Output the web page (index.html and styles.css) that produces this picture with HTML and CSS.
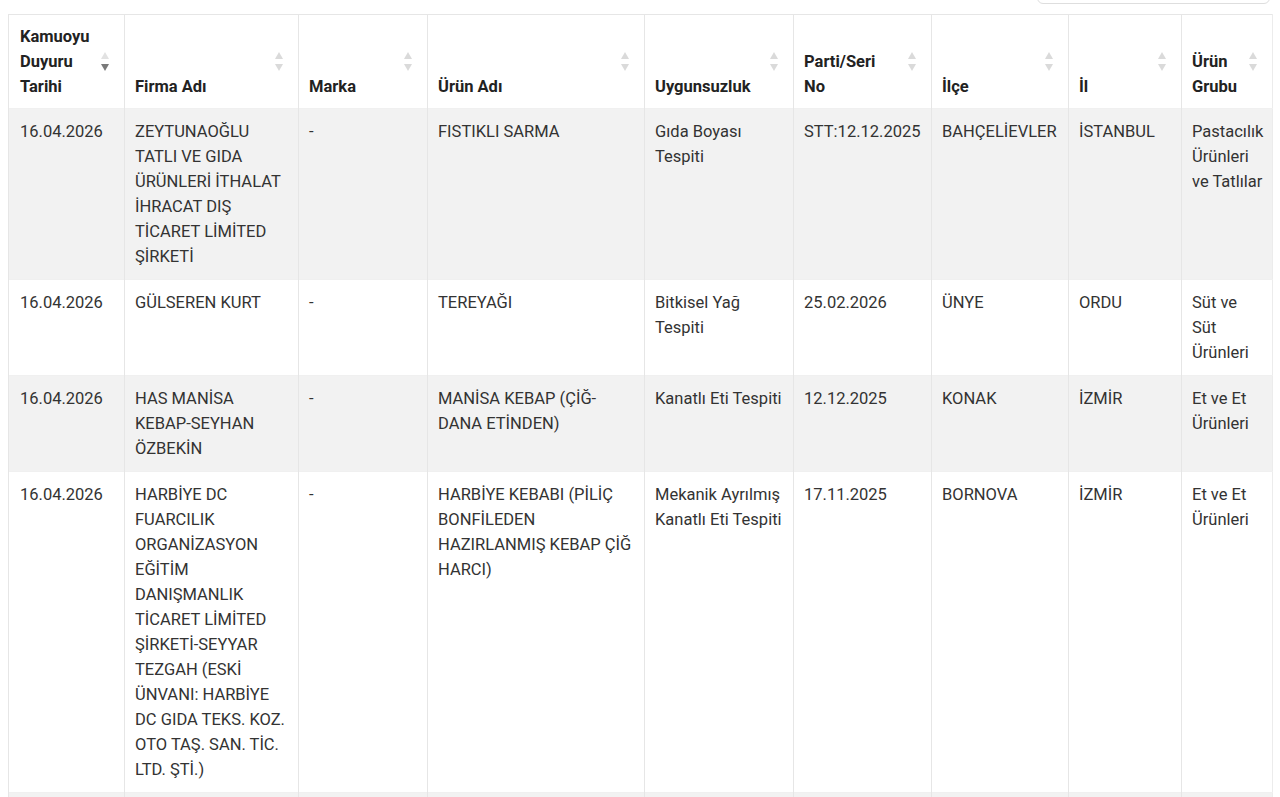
FILE: index.html
```html
<!DOCTYPE html>
<html lang="tr">
<head>
<meta charset="utf-8">
<title>Kamuoyu Duyuruları</title>
<link rel="stylesheet" href="styles.css">
</head>
<body>
<div class="page">
  <div class="filter">
    <input class="search" type="search" aria-label="Ara">
  </div>
  <table class="grid">
    <colgroup>
      <col class="w1"><col class="w2"><col class="w3"><col class="w4"><col class="w5"><col class="w6"><col class="w7"><col class="w8"><col class="w9">
    </colgroup>
    <thead>
      <tr>
        <th class="sorted">Kamuoyu Duyuru Tarihi<span class="sort"><svg viewBox="0 0 8 19" width="8" height="19"><path class="up" d="M4 0 L8 7 L0 7 Z"/><path class="down" d="M0 12 L8 12 L4 19 Z"/></svg></span></th>
        <th>Firma Adı<span class="sort"><svg viewBox="0 0 8 19" width="8" height="19"><path class="up" d="M4 0 L8 7 L0 7 Z"/><path class="down" d="M0 12 L8 12 L4 19 Z"/></svg></span></th>
        <th>Marka<span class="sort"><svg viewBox="0 0 8 19" width="8" height="19"><path class="up" d="M4 0 L8 7 L0 7 Z"/><path class="down" d="M0 12 L8 12 L4 19 Z"/></svg></span></th>
        <th>Ürün Adı<span class="sort"><svg viewBox="0 0 8 19" width="8" height="19"><path class="up" d="M4 0 L8 7 L0 7 Z"/><path class="down" d="M0 12 L8 12 L4 19 Z"/></svg></span></th>
        <th>Uygunsuzluk<span class="sort"><svg viewBox="0 0 8 19" width="8" height="19"><path class="up" d="M4 0 L8 7 L0 7 Z"/><path class="down" d="M0 12 L8 12 L4 19 Z"/></svg></span></th>
        <th>Parti/Seri No<span class="sort"><svg viewBox="0 0 8 19" width="8" height="19"><path class="up" d="M4 0 L8 7 L0 7 Z"/><path class="down" d="M0 12 L8 12 L4 19 Z"/></svg></span></th>
        <th>İlçe<span class="sort"><svg viewBox="0 0 8 19" width="8" height="19"><path class="up" d="M4 0 L8 7 L0 7 Z"/><path class="down" d="M0 12 L8 12 L4 19 Z"/></svg></span></th>
        <th>İl<span class="sort"><svg viewBox="0 0 8 19" width="8" height="19"><path class="up" d="M4 0 L8 7 L0 7 Z"/><path class="down" d="M0 12 L8 12 L4 19 Z"/></svg></span></th>
        <th>Ürün Grubu<span class="sort"><svg viewBox="0 0 8 19" width="8" height="19"><path class="up" d="M4 0 L8 7 L0 7 Z"/><path class="down" d="M0 12 L8 12 L4 19 Z"/></svg></span></th>
      </tr>
    </thead>
    <tbody>
      <tr class="odd">
        <td>16.04.2026</td>
        <td>ZEYTUNAOĞLU TATLI VE GIDA ÜRÜNLERİ İTHALAT İHRACAT DIŞ TİCARET LİMİTED ŞİRKETİ</td>
        <td>-</td>
        <td>FISTIKLI SARMA</td>
        <td>Gıda Boyası Tespiti</td>
        <td>STT:12.12.2025</td>
        <td>BAHÇELİEVLER</td>
        <td>İSTANBUL</td>
        <td>Pastacılık Ürünleri ve Tatlılar</td>
      </tr>
      <tr>
        <td>16.04.2026</td>
        <td>GÜLSEREN KURT</td>
        <td>-</td>
        <td>TEREYAĞI</td>
        <td>Bitkisel Yağ Tespiti</td>
        <td>25.02.2026</td>
        <td>ÜNYE</td>
        <td>ORDU</td>
        <td>Süt ve Süt Ürünleri</td>
      </tr>
      <tr class="odd">
        <td>16.04.2026</td>
        <td>HAS MANİSA KEBAP-SEYHAN ÖZBEKİN</td>
        <td>-</td>
        <td>MANİSA KEBAP (ÇİĞ-DANA ETİNDEN)</td>
        <td>Kanatlı Eti Tespiti</td>
        <td>12.12.2025</td>
        <td>KONAK</td>
        <td>İZMİR</td>
        <td>Et ve Et Ürünleri</td>
      </tr>
      <tr>
        <td>16.04.2026</td>
        <td>HARBİYE DC FUARCILIK ORGANİZASYON EĞİTİM DANIŞMANLIK TİCARET LİMİTED ŞİRKETİ-SEYYAR TEZGAH (ESKİ ÜNVANI: HARBİYE DC GIDA TEKS. KOZ. OTO TAŞ. SAN. TİC. LTD. ŞTİ.)</td>
        <td>-</td>
        <td>HARBİYE KEBABI (PİLİÇ BONFİLEDEN HAZIRLANMIŞ KEBAP ÇİĞ HARCI)</td>
        <td>Mekanik Ayrılmış Kanatlı Eti Tespiti</td>
        <td>17.11.2025</td>
        <td>BORNOVA</td>
        <td>İZMİR</td>
        <td>Et ve Et Ürünleri</td>
      </tr>
      <tr class="odd">
        <td>&nbsp;</td><td>&nbsp;</td><td>&nbsp;</td><td>&nbsp;</td><td>&nbsp;</td><td>&nbsp;</td><td>&nbsp;</td><td>&nbsp;</td><td>&nbsp;</td>
      </tr>
    </tbody>
  </table>
</div>
</body>
</html>
```
FILE: styles.css
```css
html, body {
  margin: 0;
  padding: 0;
  background: #ffffff;
}

body {
  font-family: Roboto, "Liberation Sans", Arial, sans-serif;
  font-size: 16.5px;
  color: #333333;
  overflow: hidden;
}

.page {
  padding: 0 8px;
}

.filter {
  display: flex;
  justify-content: flex-end;
  margin-top: -30px;
  margin-bottom: 10px;
  padding-right: 2px;
}

.search {
  width: 233px;
  height: 34px;
  box-sizing: border-box;
  border: 1px solid #dedede;
  border-radius: 6px;
  background: #fff;
}

.grid {
  width: 1264px;
  table-layout: fixed;
  border-collapse: collapse;
  border-top: 1px solid #e6e6e6;
  border-left: 1px solid #ececec;
  border-right: 1px solid #ececec;
}

.w1 { width: 116px; }
.w2 { width: 174px; }
.w3 { width: 129px; }
.w4 { width: 217px; }
.w5 { width: 149px; }
.w6 { width: 138px; }
.w7 { width: 137px; }
.w8 { width: 113px; }
.w9 { width: 91px; }

.grid th {
  position: relative;
  text-align: left;
  vertical-align: bottom;
  font-weight: 700;
  color: #222222;
  line-height: 25px;
  padding: 9px 34px 9px 10px;
  border-left: 1px solid #e6e6e6;
}

.grid th:first-child,
.grid td:first-child {
  padding-left: 11px;
}

.sort {
  position: absolute;
  right: 15px;
  top: 50%;
  margin-top: -10px;
  width: 8px;
  height: 19px;
  display: block;
}

.sort svg {
  display: block;
}

.sort path {
  fill: #dadada;
}

.sorted .sort .up {
  fill: #e2e2e2;
}

.sorted .sort .down {
  fill: #7a7a7a;
}

.grid td {
  vertical-align: top;
  line-height: 25px;
  padding: 10px 8.5px 10px 10px;
  border-left: 1px solid #e6e6e6;
  border-top: 1px solid #f0f0f0;
  color: #333333;
}

.grid tr.odd td {
  background: #f2f2f2;
}
```
